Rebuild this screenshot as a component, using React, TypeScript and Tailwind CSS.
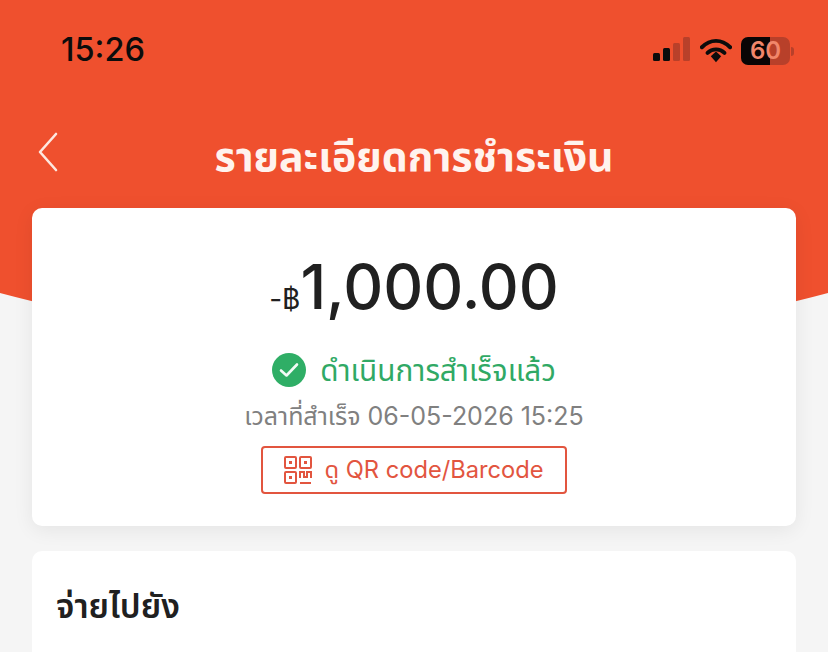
function StatusIcons() {
  return (
    <div className="flex items-center gap-[9px] mt-[2px]">
      <svg width="38" height="38" viewBox="0 0 38 38" className="w-[38px] h-[38px]">
        <rect x="0" y="21" width="7" height="8" rx="1.5" fill="#0c0c0c" />
        <rect x="10" y="16" width="7" height="13" rx="1.5" fill="#0c0c0c" />
        <rect x="20" y="11" width="7" height="18" rx="1.5" fill="#b8402a" />
        <rect x="30" y="5" width="7" height="24" rx="1.5" fill="#b8402a" />
      </svg>
      <svg width="32" height="26" viewBox="0 0 34 26" className="w-[32px] h-[26px]">
        <path d="M2 9 C11 0 23 0 32 9" fill="none" stroke="#0c0c0c" strokeWidth="4.2" strokeLinecap="round" />
        <path d="M8 15 C13 10 21 10 26 15" fill="none" stroke="#0c0c0c" strokeWidth="4.2" strokeLinecap="round" />
        <path d="M11.5 18.5 L17 13.5 L22.5 18.5 L17 25 Z" fill="#0c0c0c" />
      </svg>
      <div className="flex items-center gap-[1px]">
        <div className="w-[49px] h-[28px] rounded-[7px] bg-[linear-gradient(90deg,#0a0505_0,#0a0505_29px,#b8402a_29px,#b8402a_100%)] flex items-center justify-center text-[#f1866a] text-[24px] leading-none font-semibold font-['Inter',sans-serif]">
          60
        </div>
        <div className="w-[3px] h-[9px] rounded-r-sm bg-[#b8402a]" />
      </div>
    </div>
  );
}

function QrIcon() {
  return (
    <svg width="28" height="28" viewBox="0 0 28 28" fill="none" stroke="#e2553f" strokeWidth="2" className="w-[28px] h-[28px]">
      <rect x="1" y="1" width="11" height="11" rx="1" />
      <rect x="16" y="1" width="11" height="11" rx="1" />
      <rect x="1" y="16" width="11" height="11" rx="1" />
      <rect x="5" y="5" width="3" height="3" fill="#e2553f" stroke="none" />
      <rect x="20" y="5" width="3" height="3" fill="#e2553f" stroke="none" />
      <rect x="5" y="20" width="3" height="3" fill="#e2553f" stroke="none" />
      <path d="M16 22V16H20V21H23V16H27V22M16 27H27" />
    </svg>
  );
}

export default function App() {
  return (
    <div className="relative w-[828px] h-[652px] overflow-hidden bg-[#f5f5f5] font-['Inter','Noto_Sans_Thai','Noto_Sans',sans-serif]">
      {/* curved orange backdrop */}
      <div className="absolute left-[-186px] top-0 w-[1200px] h-[340px] rounded-[50%] bg-[#ef502e]" />
      <div className="absolute left-0 top-0 w-full h-[170px] bg-[#ef502e]" />

      <div className="relative flex flex-col">
        <div className="h-[100px] pl-[61px] pr-[34px] flex items-center justify-between">
          <span className="text-[32.5px] font-medium text-[#0c0c0c]">15:26</span>
          <StatusIcons />
        </div>

        <div className="h-[108px] relative flex items-start justify-center">
          <svg width="20" height="40" viewBox="0 0 20 40" fill="none" className="absolute left-[38px] top-[32px] w-[20px] h-[40px]">
            <path d="M18 2 L2 20 L18 38" stroke="#fde8e0" strokeWidth="2.6" strokeLinecap="round" strokeLinejoin="round" />
          </svg>
          <h1 className="mt-[29px] text-[41px] leading-[54px] font-bold text-[#fff3ee]">รายละเอียดการชำระเงิน</h1>
        </div>

        <div className="mx-[32px] h-[318px] bg-white rounded-[10px] shadow-[0_4px_20px_rgba(0,0,0,0.07)] flex flex-col items-center">
          <div className="mt-[42px] h-[74px] flex items-baseline text-[#202020]">
            <span className="text-[28px]">-฿</span>
            <span className="text-[62px] leading-[74px] font-medium">1,000.00</span>
          </div>
          <div className="mt-[28px] flex items-center gap-[14px] h-[36px]">
            <div className="w-[34px] h-[34px] rounded-full bg-[#2fae66] flex items-center justify-center">
              <svg width="20" height="16" viewBox="0 0 20 16" fill="none" className="w-[20px] h-[16px]">
                <path d="M2 8.5 L7.5 13.5 L18 2.5" stroke="#f2fbf6" strokeWidth="2.6" strokeLinecap="round" strokeLinejoin="round" />
              </svg>
            </div>
            <span className="text-[29.7px] leading-[36px] text-[#30a965]">ดำเนินการสำเร็จแล้ว</span>
          </div>
          <div className="mt-[10px] text-[25px] leading-[36px] text-[#808080]">เวลาที่สำเร็จ 06-05-2026 15:25</div>
          <div className="mt-[12px] w-[306px] h-[48px] border-2 border-[#e2553f] rounded-[4px] flex items-center justify-center gap-[12px]">
            <QrIcon />
            <span className="text-[23.7px] text-[#e2553f]">ดู QR code/Barcode</span>
          </div>
        </div>

        <div className="mx-[32px] mt-[25px] h-[200px] bg-white rounded-[10px] pl-[24px] pt-[32px]">
          <h2 className="text-[33.5px] leading-[46px] font-semibold text-[#202020]">จ่ายไปยัง</h2>
        </div>
      </div>
    </div>
  );
}
